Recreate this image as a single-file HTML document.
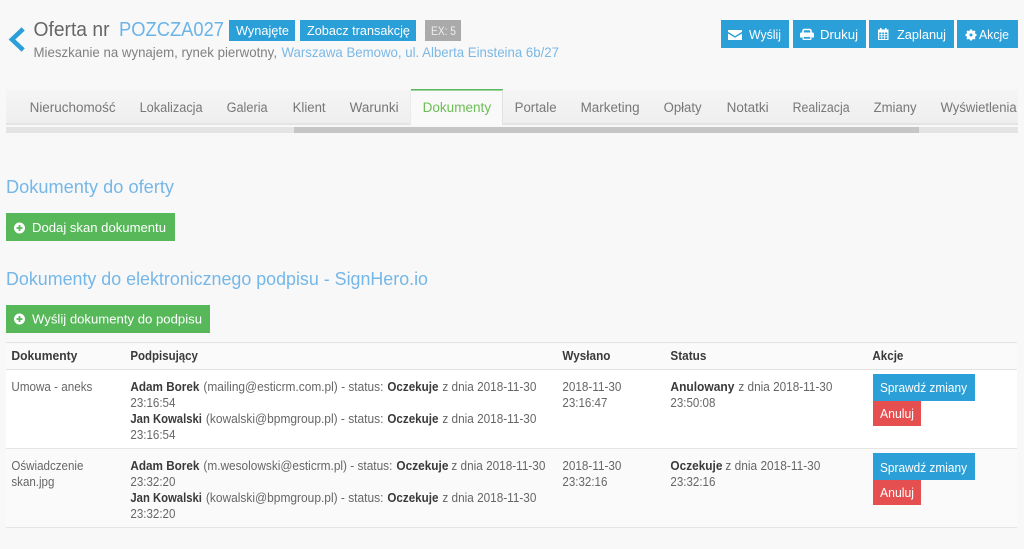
<!DOCTYPE html>
<html lang="pl">
<head>
<meta charset="utf-8">
<title>Oferta nr POZCZA027</title>
<style>
html,body{margin:0;padding:0;background:#f8f8f8;width:1024px;height:549px;overflow:hidden}
svg{display:block;position:absolute;left:0;top:0;filter:blur(.3px)}
text{font-family:"Liberation Sans",sans-serif;font-size:12.5px;fill:#666}
.b{font-weight:bold;fill:#3a3a3a}
.t{font-size:13.5px;fill:#777}
.w{fill:#fff;font-size:13px}
.h{font-size:18px;fill:#75b7e8}
</style>
</head>
<body>
<svg width="1024" height="549" viewBox="0 0 1024 549" xmlns="http://www.w3.org/2000/svg">
<defs>
<linearGradient id="tabg" x1="0" y1="0" x2="0" y2="1"><stop offset="0" stop-color="#f5f5f5"/><stop offset="1" stop-color="#eeeeee"/></linearGradient>
</defs>

<!-- header -->
<path d="M21.5 30.5 L12 39.5 L21.5 48.5" fill="none" stroke="#2a9fd8" stroke-width="4.6" stroke-linecap="square"/>
<text x="33.5" y="36" style="font-size:20px;fill:#666" textLength="76" lengthAdjust="spacingAndGlyphs">Oferta nr</text>
<text x="119" y="36" style="font-size:20px;fill:#6ab4e8" textLength="105" lengthAdjust="spacingAndGlyphs">POZCZA027</text>
<rect x="229" y="20" width="66" height="21" fill="#2a9fd8"/>
<text x="236" y="35" class="w" textLength="53" lengthAdjust="spacingAndGlyphs">Wynajęte</text>
<rect x="300" y="20" width="116" height="21" fill="#2a9fd8"/>
<text x="307" y="35" class="w" textLength="103" lengthAdjust="spacingAndGlyphs">Zobacz transakcję</text>
<rect x="425" y="20" width="36" height="21" fill="#aaaaaa"/>
<text x="431" y="35" style="fill:#eee;font-size:12px" textLength="25" lengthAdjust="spacingAndGlyphs">EX: 5</text>
<text x="33.5" y="57" style="font-size:14px;fill:#808080" textLength="243.5" lengthAdjust="spacingAndGlyphs">Mieszkanie na wynajem, rynek pierwotny,</text>
<text x="281.5" y="57" style="font-size:14px;fill:#7ab8e6" textLength="277.5" lengthAdjust="spacingAndGlyphs">Warszawa Bemowo, ul. Alberta Einsteina 6b/27</text>

<!-- top buttons -->
<rect x="721" y="20" width="68" height="28" fill="#2a9fd8"/>
<path d="M728 30h14v1.800l-7 4.300-7-4.300z M728 33.500l7 4.300 7-4.300v6.500h-14z" fill="#fff"/>
<text x="749" y="39" class="w" textLength="32" lengthAdjust="spacingAndGlyphs">Wyślij</text>
<rect x="793" y="20" width="73" height="28" fill="#2a9fd8"/>
<path d="M803 33v-2a1.500 1.500 0 0 1 1.500-1.500h5a1.500 1.500 0 0 1 1.500 1.500v2" fill="none" stroke="#fff" stroke-width="1.600"/>
<path d="M801.500 32.500h11a1.500 1.500 0 0 1 1.500 1.500v3.500h-14v-3.500a1.500 1.500 0 0 1 1.500-1.500z" fill="#fff"/>
<rect x="803.200" y="36.300" width="7.600" height="3" fill="#2a9fd8" stroke="#fff" stroke-width="1.200"/>
<text x="820" y="39" class="w" textLength="38" lengthAdjust="spacingAndGlyphs">Drukuj</text>
<rect x="869" y="20" width="85" height="28" fill="#2a9fd8"/>
<path d="M878 29.500h2v-1.500h1.500v1.500h3.500v-1.500h1.500v1.500h2v10.500h-10.500z M879.200 32.500v6.500h8.100v-6.500z" fill="#fff" fill-rule="evenodd"/>
<path d="M881.800 32.500v6.500M884.500 32.500v6.500M879.200 34.700h8.100M879.200 36.900h8.100" stroke="#fff" stroke-width=".8" fill="none"/>
<text x="897" y="39" class="w" textLength="49" lengthAdjust="spacingAndGlyphs">Zaplanuj</text>
<rect x="957" y="20" width="61" height="28" fill="#2a9fd8"/>
<circle cx="971" cy="35" r="3.300" fill="none" stroke="#fff" stroke-width="2.800"/>
<path d="M971 29.500v11M965.500 35h11M967.100 31.100l7.800 7.800M974.900 31.100l-7.800 7.800" stroke="#fff" stroke-width="2" fill="none"/>
<circle cx="971" cy="35" r="1.500" fill="#2a9fd8"/>
<text x="979" y="39" class="w" textLength="30" lengthAdjust="spacingAndGlyphs">Akcje</text>

<!-- tabs -->
<rect x="6" y="89" width="1012" height="35" fill="url(#tabg)"/>
<rect x="6" y="123" width="1012" height="2" fill="#e4e4e4"/>
<rect x="411" y="89" width="92" height="36" fill="#f9f9f9"/>
<rect x="411" y="89" width="92" height="1.600" fill="#5cb85c"/>
<rect x="502" y="90" width="1" height="35" fill="#e2e2e2"/>
<rect x="410" y="90" width="1" height="35" fill="#ebebeb"/>
<g transform="translate(-.4,0)">
<text x="30" y="112" class="t" textLength="86" lengthAdjust="spacingAndGlyphs">Nieruchomość</text>
<text x="140" y="112" class="t" textLength="63" lengthAdjust="spacingAndGlyphs">Lokalizacja</text>
<text x="227" y="112" class="t" textLength="41" lengthAdjust="spacingAndGlyphs">Galeria</text>
<text x="293" y="112" class="t" textLength="33" lengthAdjust="spacingAndGlyphs">Klient</text>
<text x="350" y="112" class="t" textLength="49" lengthAdjust="spacingAndGlyphs">Warunki</text>
<text x="423" y="112" class="t" style="fill:#6cbd55" textLength="68.500" lengthAdjust="spacingAndGlyphs">Dokumenty</text>
<text x="515" y="112" class="t" textLength="42" lengthAdjust="spacingAndGlyphs">Portale</text>
<text x="581" y="112" class="t" textLength="59" lengthAdjust="spacingAndGlyphs">Marketing</text>
<text x="664" y="112" class="t" textLength="38" lengthAdjust="spacingAndGlyphs">Opłaty</text>
<text x="727" y="112" class="t" textLength="42" lengthAdjust="spacingAndGlyphs">Notatki</text>
<text x="793" y="112" class="t" textLength="57" lengthAdjust="spacingAndGlyphs">Realizacja</text>
<text x="874" y="112" class="t" textLength="43" lengthAdjust="spacingAndGlyphs">Zmiany</text>
<text x="941" y="112" class="t" textLength="76" lengthAdjust="spacingAndGlyphs">Wyświetlenia</text>
</g>
<rect x="6" y="127" width="1012" height="6" fill="#e4e4e4"/>
<rect x="294" y="127" width="625" height="6" fill="#c6c6c6"/>

<!-- sections -->
<text x="6" y="193" class="h" textLength="168" lengthAdjust="spacingAndGlyphs">Dokumenty do oferty</text>
<rect x="6" y="213" width="169" height="28" fill="#57b85a"/>
<circle cx="19.500" cy="228" r="5.500" fill="#fff"/>
<path d="M19.500 225v6M16.500 228h6" stroke="#57b85a" stroke-width="1.800"/>
<text x="32" y="232" class="w" textLength="134" lengthAdjust="spacingAndGlyphs">Dodaj skan dokumentu</text>

<text x="6" y="285" class="h" textLength="422" lengthAdjust="spacingAndGlyphs">Dokumenty do elektronicznego podpisu - SignHero.io</text>
<rect x="6" y="305" width="204" height="28" fill="#57b85a"/>
<circle cx="19.500" cy="319" r="5.500" fill="#fff"/>
<path d="M19.500 316v6M16.500 319h6" stroke="#57b85a" stroke-width="1.800"/>
<text x="32" y="323.500" class="w" textLength="170" lengthAdjust="spacingAndGlyphs">Wyślij dokumenty do podpisu</text>

<!-- table -->
<rect x="6" y="343" width="1011" height="26" fill="#fafafa"/>
<rect x="6" y="342" width="1011" height="1" fill="#e2e2e2"/>
<rect x="6" y="369" width="1011" height="1" fill="#e2e2e2"/>
<rect x="6" y="370" width="1011" height="78" fill="#ffffff"/>
<rect x="6" y="448" width="1011" height="1" fill="#e4e4e4"/>
<rect x="6" y="449" width="1011" height="78" fill="#fafafa"/>
<rect x="6" y="527" width="1011" height="1" fill="#e4e4e4"/>

<g transform="translate(-.6,0)">
<text x="12" y="360" class="b" textLength="66" lengthAdjust="spacingAndGlyphs">Dokumenty</text>
<text x="131" y="360" class="b" textLength="67.500" lengthAdjust="spacingAndGlyphs">Podpisujący</text>
<text x="563" y="360" class="b" textLength="48" lengthAdjust="spacingAndGlyphs">Wysłano</text>
<text x="671" y="360" class="b" textLength="36" lengthAdjust="spacingAndGlyphs">Status</text>
<text x="873" y="360" class="b" textLength="31" lengthAdjust="spacingAndGlyphs">Akcje</text>

<!-- row 1 -->
<text x="12" y="391" textLength="81" lengthAdjust="spacingAndGlyphs">Umowa - aneks</text>
<text x="131" y="391" class="b" textLength="69" lengthAdjust="spacingAndGlyphs">Adam Borek</text>
<text x="204" y="391" textLength="180" lengthAdjust="spacingAndGlyphs">(mailing@esticrm.com.pl) - status:</text>
<text x="388" y="391" class="b" textLength="51" lengthAdjust="spacingAndGlyphs">Oczekuje</text>
<text x="443" y="391" textLength="94" lengthAdjust="spacingAndGlyphs">z dnia 2018-11-30</text>
<text x="131" y="407" textLength="45" lengthAdjust="spacingAndGlyphs">23:16:54</text>
<text x="131" y="423" class="b" textLength="71.500" lengthAdjust="spacingAndGlyphs">Jan Kowalski</text>
<text x="206.500" y="423" textLength="177.500" lengthAdjust="spacingAndGlyphs">(kowalski@bpmgroup.pl) - status:</text>
<text x="388" y="423" class="b" textLength="51" lengthAdjust="spacingAndGlyphs">Oczekuje</text>
<text x="443" y="423" textLength="94" lengthAdjust="spacingAndGlyphs">z dnia 2018-11-30</text>
<text x="131" y="439" textLength="45" lengthAdjust="spacingAndGlyphs">23:16:54</text>
<text x="563" y="391" textLength="59" lengthAdjust="spacingAndGlyphs">2018-11-30</text>
<text x="563" y="407" textLength="45" lengthAdjust="spacingAndGlyphs">23:16:47</text>
<text x="671" y="391" class="b" textLength="64" lengthAdjust="spacingAndGlyphs">Anulowany</text>
<text x="739" y="391" textLength="94" lengthAdjust="spacingAndGlyphs">z dnia 2018-11-30</text>
<text x="671" y="407" textLength="45" lengthAdjust="spacingAndGlyphs">23:50:08</text>

<!-- row 2 -->
<text x="12" y="470" textLength="72" lengthAdjust="spacingAndGlyphs">Oświadczenie</text>
<text x="12" y="486" textLength="43" lengthAdjust="spacingAndGlyphs">skan.jpg</text>
<text x="131" y="470" class="b" textLength="69" lengthAdjust="spacingAndGlyphs">Adam Borek</text>
<text x="204" y="470" textLength="189" lengthAdjust="spacingAndGlyphs">(m.wesolowski@esticrm.pl) - status:</text>
<text x="397" y="470" class="b" textLength="52" lengthAdjust="spacingAndGlyphs">Oczekuje</text>
<text x="452" y="470" textLength="94" lengthAdjust="spacingAndGlyphs">z dnia 2018-11-30</text>
<text x="131" y="486" textLength="45" lengthAdjust="spacingAndGlyphs">23:32:20</text>
<text x="131" y="502" class="b" textLength="71.500" lengthAdjust="spacingAndGlyphs">Jan Kowalski</text>
<text x="206.500" y="502" textLength="177.500" lengthAdjust="spacingAndGlyphs">(kowalski@bpmgroup.pl) - status:</text>
<text x="388" y="502" class="b" textLength="51" lengthAdjust="spacingAndGlyphs">Oczekuje</text>
<text x="443" y="502" textLength="94" lengthAdjust="spacingAndGlyphs">z dnia 2018-11-30</text>
<text x="131" y="518" textLength="45" lengthAdjust="spacingAndGlyphs">23:32:20</text>
<text x="563" y="470" textLength="59" lengthAdjust="spacingAndGlyphs">2018-11-30</text>
<text x="563" y="486" textLength="45" lengthAdjust="spacingAndGlyphs">23:32:16</text>
<text x="671" y="470" class="b" textLength="52" lengthAdjust="spacingAndGlyphs">Oczekuje</text>
<text x="726" y="470" textLength="95" lengthAdjust="spacingAndGlyphs">z dnia 2018-11-30</text>
<text x="671" y="486" textLength="45" lengthAdjust="spacingAndGlyphs">23:32:16</text>
</g>

<rect x="873" y="374" width="102" height="27" fill="#2a9fd8"/>
<text x="880" y="392" class="w" textLength="87" lengthAdjust="spacingAndGlyphs">Sprawdź zmiany</text>
<rect x="873" y="401" width="48" height="25" fill="#e54f4f"/>
<text x="880" y="418" class="w" textLength="34" lengthAdjust="spacingAndGlyphs">Anuluj</text>
<rect x="873" y="453" width="102" height="27" fill="#2a9fd8"/>
<text x="880" y="472" class="w" textLength="87" lengthAdjust="spacingAndGlyphs">Sprawdź zmiany</text>
<rect x="873" y="480" width="48" height="25" fill="#e54f4f"/>
<text x="880" y="497" class="w" textLength="34" lengthAdjust="spacingAndGlyphs">Anuluj</text>
</svg>
</body>
</html>
